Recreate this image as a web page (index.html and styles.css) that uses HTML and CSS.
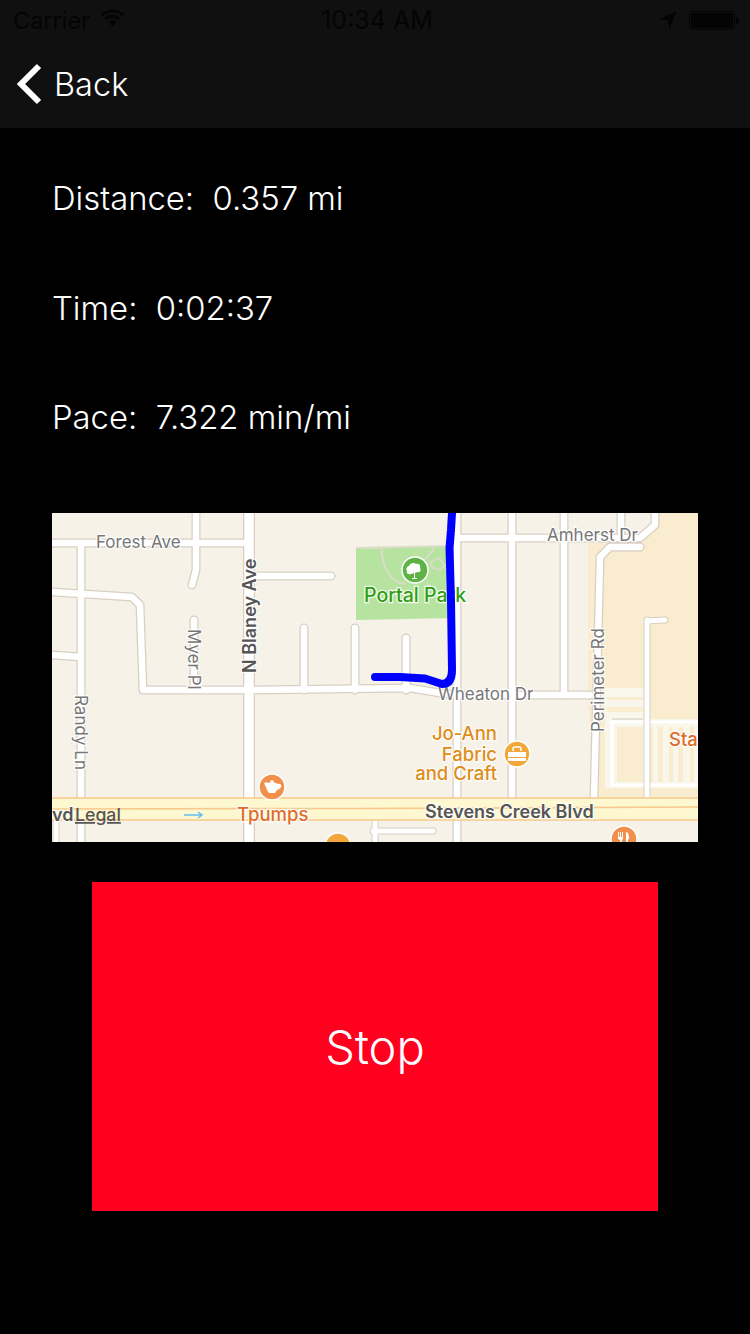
FILE: index.html
```html
<!DOCTYPE html>
<html lang="en">
<head>
<meta charset="utf-8">
<title>Run</title>
<link rel="stylesheet" href="styles.css">
</head>
<body>
<div class="screen">
  <header class="topbar">
    <div class="status">
      <div class="status-left">
        <span>Carrier</span>
        <svg class="wifi" viewBox="0 0 22 16"><path d="M11 15.5 7.3 11.6a5.3 5.3 0 0 1 7.4 0zM5.6 9.9 3.9 8.1a10 10 0 0 1 14.2 0l-1.700 1.800a7.600 7.600 0 0 0-10.800 0zM2.300 6.500.6 4.700a14.800 14.800 0 0 1 20.800 0l-1.700 1.800a12.400 12.400 0 0 0-17.400 0z"/></svg>
      </div>
      <div class="status-time">10:34 AM</div>
      <div class="status-right">
        <svg class="arrow" viewBox="0 0 18 18"><path d="M17.500.5 10.500 18 9 9.500.5 8z"/></svg>
        <div class="battery"><div class="battery-fill"></div></div>
        <div class="battery-tip"></div>
      </div>
    </div>
    <nav class="navbar">
      <svg class="chevron" viewBox="0 0 26 42"><path d="M23 3 5 21l18 18"/></svg>
      <span class="back">Back</span>
    </nav>
  </header>
  <main class="content">
    <section class="stats">
      <p class="stat">Distance:  0.357 mi</p>
      <p class="stat">Time:  0:02:37</p>
      <p class="stat">Pace:  7.322 min/mi</p>
    </section>
    <svg class="map" viewBox="52 513 646 329">
      <rect class="land" x="52" y="513" width="646" height="329"/>
      <path class="lot" d="M588 543H640L655 530V513H698V798H594L588 700z"/>
      <rect class="paved" x="605" y="688" width="44" height="100"/>
      <rect class="paved" x="649" y="719" width="49" height="69"/>
      <path class="lot" d="M607 680H643V688H607zM607 697H643V700H607zM607 707H643V712H607zM617 727H643V782H617zM650 727H653V782H650zM658 727H663V782H658zM669 727H673V782H669zM678 727H683V782H678zM690 727H694V782H690z"/>
      <rect class="lot-grey" x="612" y="718" width="31" height="2"/>
      <path class="lot-lines" d="M609 722H698M612 722V785H698"/>
      <path class="park" d="M356 549 455 546V618L356 620z"/>
      <path class="park-path" d="M356 548 455 546M382 547C381 568 392 584 406 584M435 548 423 561M430 563 438 558 445 565 440 570 433 568zM445 568 450 574M427 583 433 590"/>

      <g class="casing">
        <path class="r7" d="M52 543H250M81 543V842M196 513V543M52 592 132 597 140 605 143 690 250 690 410 688 440 693 460 695H590"/>
        <path class="r7" d="M196 543V570L192 585M249 576H331M52 655 81 657M194 620V690M304 628V690M355 628V690M406 638V690"/>
        <path class="r7" d="M457 513V842M455 538H640L655 525V513M621 513V538M512 513V798M564 513V695M640 547H610L600 557 598 640 594 798"/>
        <path class="r5" d="M56 820V842M375 820V842M373 831H433M647 620V798M665 620 647 621"/>
        <path class="r12" d="M249 513V842"/>
      </g>
      <g class="road">
        <path class="r7" d="M52 543H250M81 543V842M196 513V543M52 592 132 597 140 605 143 690 250 690 410 688 440 693 460 695H590"/>
        <path class="r7" d="M196 543V570L192 585M249 576H331M52 655 81 657M194 620V690M304 628V690M355 628V690M406 638V690"/>
        <path class="r7" d="M457 513V842M455 538H640L655 525V513M621 513V538M512 513V798M564 513V695M640 547H610L600 557 598 640 594 798"/>
        <path class="r5" d="M56 820V842M375 820V842M373 831H433M647 620V798M665 620 647 621"/>
        <path class="r12" d="M249 513V842"/>
      </g>

      <rect class="hwy" x="52" y="798" width="646" height="22"/>
      <path class="hwy-line" d="M52 798H698M52 809 360 808.500 698 807M52 820H698"/>
      <path class="flow" d="M184 815H202M198 812l4 3-4 3"/>

      <text class="lbl grey" x="96" y="548">Forest Ave</text>
      <text class="lbl grey" x="547" y="541">Amherst Dr</text>
      <text class="lbl grey" x="438" y="700">Wheaton Dr</text>
      <text class="lbl dark bold" transform="translate(256 673) rotate(-90)">N Blaney Ave</text>
      <text class="lbl grey" transform="translate(188 629) rotate(90)">Myer Pl</text>
      <text class="lbl grey" transform="translate(75 695) rotate(90)">Randy Ln</text>
      <text class="lbl grey" transform="translate(604 732) rotate(-90)">Perimeter Rd</text>
      <text class="lbl dark bold" x="425" y="818">Stevens Creek Blvd</text>
      <text class="lbl dark bold" x="52" y="821">vd</text>
      <text class="legal" x="75" y="821">Legal</text>
      <text class="lbl green park-name" x="364" y="602">Portal Park</text>
      <path class="route" d="M452 513 451 530 449.500 548 451 600 452 670Q452 684 442 684L425 678.500 400 677H375"/>
      <text class="lbl amber big" text-anchor="end"><tspan x="497" y="740">Jo-Ann</tspan><tspan x="497" y="761">Fabric</tspan><tspan x="497" y="780">and Craft</tspan></text>
      <text class="lbl orange big" x="237" y="821">Tpumps</text>
      <text class="lbl orange big" x="669" y="746">Sta</text>

      <circle class="pin-green" cx="415" cy="570" r="13"/>
      <path class="glyph" d="M414 578v-5l-3 1c-3 1-5-1-4-3-2-3 1-5 2-5 1-3 5-4 7-2 3-1 5 2 4 4 2 3-1 5-3 4l-2 1v5h2v1h-5v-1z"/>
      <circle class="pin-amber" cx="517" cy="754" r="13"/>
      <path class="glyph" d="M508 752h18v5h-18zM508 758h18v3h-18z"/>
      <path class="glyph-line" d="M513 751v-2q0-2 2-2h4q2 0 2 2v2"/>
      <circle class="pin-orange" cx="272" cy="787" r="13"/>
      <path class="glyph" d="M264 783c3-1 3-1 4 0l3-1-1-1 2-1 2 1-1 1 3 1 2 1c3-1 4 2 3 3-1 2-3 3-4 3l-2 3h-6c-2-2-3-6-5-10z"/>
      <circle class="pin-orange" cx="624" cy="839" r="13"/>
      <path class="glyph" d="M618 832h1v5h1v-5h1v5h1v-5h1v7l-1 1v8h-2v-8l-2-1zM626 832c2 0 3 3 3 6l-1 2v8h-2z"/>
      <circle class="pin-amber" cx="338" cy="846" r="13"/>
    </svg>
    <button class="stop" type="button">Stop</button>
  </main>
</div>
</body>
</html>
```
FILE: styles.css
```css
* { box-sizing: border-box; }
html, body { margin: 0; padding: 0; background: #000; }
body { font-family: Inter, Roboto, "Liberation Sans", sans-serif; color: #fff; }
.screen { width: 750px; height: 1334px; display: flex; flex-direction: column; background: #000; overflow: hidden; }

.topbar { height: 128px; background: #101010; flex: none; }
.status { height: 40px; display: flex; align-items: center; justify-content: space-between; padding: 0 9px 0 13px; color: #040404; font-size: 23.5px; }
.status-left { flex: 1; display: flex; align-items: center; gap: 10px; }
.wifi { width: 25px; height: 18px; margin-top: -4px; fill: #040404; }
.status-time { font-size: 25px; margin-left: 0; }
.status-right { flex: 1; display: flex; align-items: center; justify-content: flex-end; }
.arrow { width: 18px; height: 18px; fill: #040404; margin-right: 12px; }
.battery { width: 46px; height: 19px; border: 1px solid #040404; border-radius: 3px; padding: 1px; }
.battery-fill { height: 100%; background: #040404; border-radius: 2px; }
.battery-tip { width: 3px; height: 7px; background: #040404; border-radius: 0 2px 2px 0; margin-left: 1px; margin-right: 2px; }

.navbar { height: 88px; display: flex; align-items: center; padding-left: 16px; }
.chevron { width: 26px; height: 42px; fill: none; stroke: #fff; stroke-width: 6; margin-right: 12px; }
.back { font-size: 32.5px; font-weight: 350; line-height: 1; margin-top: 2px; }

.content { flex: 1; display: flex; flex-direction: column; padding-top: 16px; }
.stats { padding-left: 52px; }
.stat { margin: 0; height: 109.5px; line-height: 109px; font-size: 32.8px; font-weight: 350; white-space: pre; }

.map { display: block; width: 646px; height: 329px; margin: 40px 0 40px 52px; flex: none; }
.stop { display: block; width: 566px; height: 329px; margin-left: 92px; padding: 0; border: 0; background: #ff001f; color: #fff; font: 350 47px Inter, Roboto, "Liberation Sans", sans-serif; }

.land { fill: #f6f2e8; }
.lot { fill: #f9eccf; }
.paved { fill: #f9f6ec; }
.lot-grey { fill: #e4e1d6; }
.lot-lines { fill: none; stroke: #fff; stroke-width: 3; }
.park { fill: #b7e3a1; }
.park-path { fill: none; stroke: #d9dcc6; stroke-width: 2; }
.casing path, .road path { fill: none; stroke-linecap: round; stroke-linejoin: round; }
.casing path { stroke: #d8cfc2; }
.road path { stroke: #fff; }
.casing .r5 { stroke-width: 7; }
.road .r5 { stroke-width: 5; }
.casing .r7 { stroke-width: 9; }
.road .r7 { stroke-width: 6.5; }
.casing .r12 { stroke-width: 12; }
.road .r12 { stroke-width: 9.5; }
.hwy { fill: #fdf8d0; }
.hwy-line { fill: none; stroke: #f7c98c; stroke-width: 1.6; }
.flow { fill: none; stroke: #62bdf2; stroke-width: 1.5; }
.route { fill: none; stroke: #00f; stroke-width: 8; stroke-linecap: round; stroke-linejoin: round; }

.lbl { font-family: Inter, Roboto, "Liberation Sans", sans-serif; font-size: 17px; paint-order: stroke; stroke: #fff; stroke-width: 2.5px; stroke-opacity: .85; }
.big { font-size: 18.5px; font-weight: 500; }
.park-name { font-size: 19.5px; font-weight: 500; }
.bold { font-weight: 600; font-size: 18px; }
.grey { fill: #777; }
.dark { fill: #555; }
.green { fill: #2f9e12; }
.amber { fill: #dd8d18; }
.orange { fill: #dd6d2c; }
.legal { font-family: Inter, Roboto, "Liberation Sans", sans-serif; font-size: 17.7px; font-weight: 500; fill: #555; text-decoration: underline; }
.pin-green, .pin-amber, .pin-orange { stroke: #fff; stroke-width: 1.5; }
.pin-green { fill: #5fb246; }
.pin-amber { fill: #f2a73a; }
.pin-orange { fill: #f0904a; }
.glyph { fill: #fff; }
.glyph-line { fill: none; stroke: #fff; stroke-width: 1.5; }
```
